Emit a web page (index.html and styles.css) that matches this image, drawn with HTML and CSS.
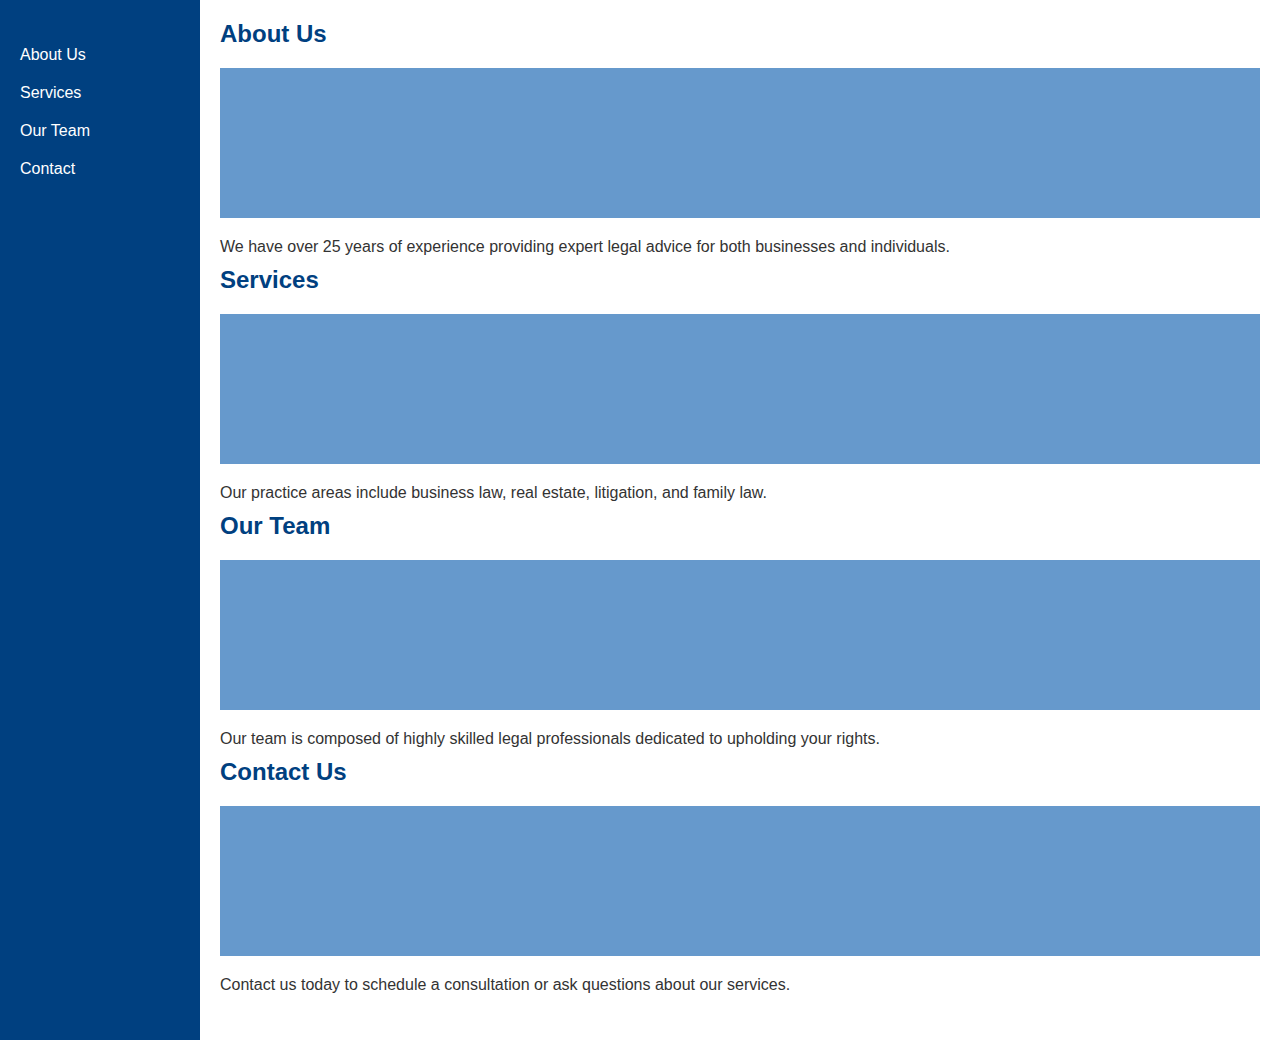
FILE: index.html
```html
<!DOCTYPE html>
<html lang="en">
<head>
<meta charset="utf-8">
<title>Law Firm</title>
<link rel="stylesheet" href="styles.css">
</head>
<body>
<div class="layout">
  <nav class="sidebar">
    <ul class="nav">
      <li><a href="#about">About Us</a></li>
      <li><a href="#services">Services</a></li>
      <li><a href="#team">Our Team</a></li>
      <li><a href="#contact">Contact</a></li>
    </ul>
  </nav>
  <main class="content">
    <section class="section" id="about">
      <h2>About Us</h2>
      <div class="placeholder"></div>
      <p>We have over 25 years of experience providing expert legal advice for both businesses and individuals.</p>
    </section>
    <section class="section" id="services">
      <h2>Services</h2>
      <div class="placeholder"></div>
      <p>Our practice areas include business law, real estate, litigation, and family law.</p>
    </section>
    <section class="section" id="team">
      <h2>Our Team</h2>
      <div class="placeholder"></div>
      <p>Our team is composed of highly skilled legal professionals dedicated to upholding your rights.</p>
    </section>
    <section class="section" id="contact">
      <h2>Contact Us</h2>
      <div class="placeholder"></div>
      <p>Contact us today to schedule a consultation or ask questions about our services.</p>
    </section>
  </main>
</div>
</body>
</html>
```

FILE: styles.css
```css
html, body {
  margin: 0;
  padding: 0;
}
body {
  font-family: "Liberation Sans", Arial, sans-serif;
  font-size: 16px;
  color: #333333;
  background: #ffffff;
}
.layout {
  display: flex;
  min-height: 1040px;
}
.sidebar {
  width: 200px;
  flex: 0 0 200px;
  background: #004080;
  padding: 20px;
  box-sizing: border-box;
}
.nav {
  list-style: none;
  margin: 16px 0;
  padding: 0;
}
.nav a {
  display: block;
  padding: 10px 0;
  color: #ffffff;
  text-decoration: none;
}
.content {
  flex: 1;
  padding: 20px;
}
.section h2 {
  margin: 0 0 20px;
  font-size: 24px;
  font-weight: bold;
  color: #004080;
}
.placeholder {
  height: 150px;
  background: #6699cc;
  margin-bottom: 20px;
}
.section p {
  margin: 0 0 10px;
}
```
